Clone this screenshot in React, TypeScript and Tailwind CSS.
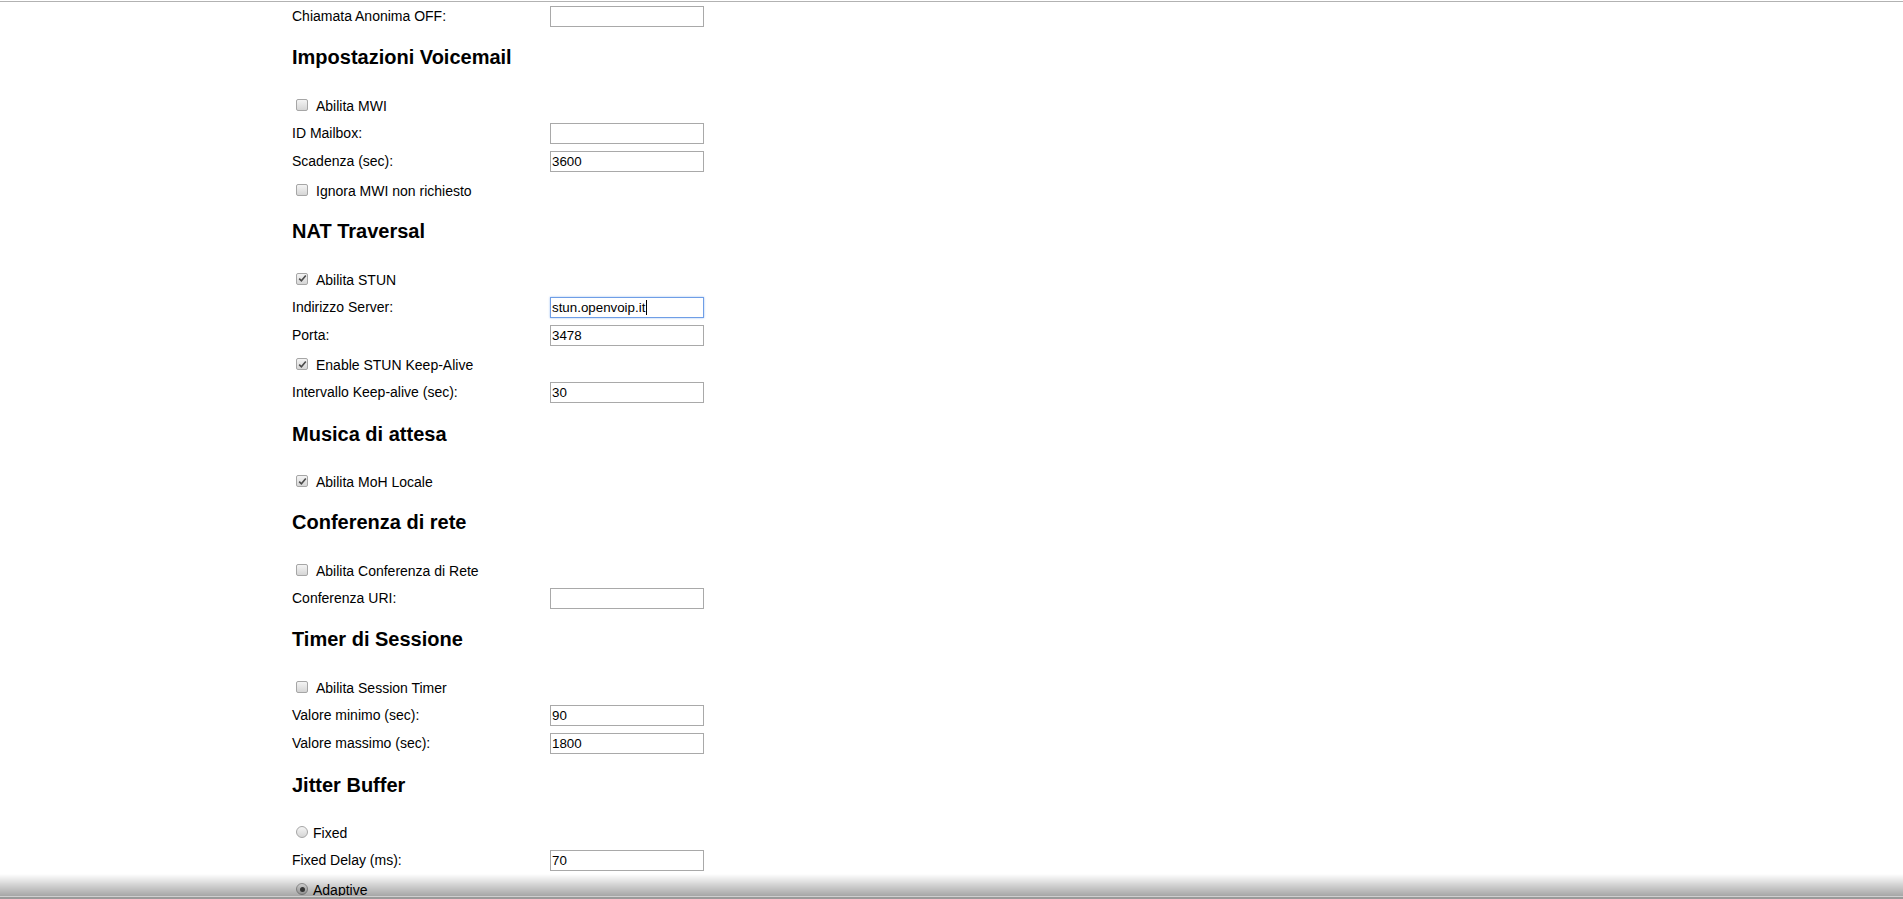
import React from "react";

type Row =
  | { kind: "heading"; text: string }
  | { kind: "input"; label: string; value: string; focused?: boolean }
  | { kind: "check"; label: string; checked: boolean }
  | { kind: "radio"; label: string; checked: boolean };

const rows: Row[] = [
  { kind: "input", label: "Chiamata Anonima OFF:", value: "" },
  { kind: "heading", text: "Impostazioni Voicemail" },
  { kind: "check", label: "Abilita MWI", checked: false },
  { kind: "input", label: "ID Mailbox:", value: "" },
  { kind: "input", label: "Scadenza (sec):", value: "3600" },
  { kind: "check", label: "Ignora MWI non richiesto", checked: false },
  { kind: "heading", text: "NAT Traversal" },
  { kind: "check", label: "Abilita STUN", checked: true },
  { kind: "input", label: "Indirizzo Server:", value: "stun.openvoip.it", focused: true },
  { kind: "input", label: "Porta:", value: "3478" },
  { kind: "check", label: "Enable STUN Keep-Alive", checked: true },
  { kind: "input", label: "Intervallo Keep-alive (sec):", value: "30" },
  { kind: "heading", text: "Musica di attesa" },
  { kind: "check", label: "Abilita MoH Locale", checked: true },
  { kind: "heading", text: "Conferenza di rete" },
  { kind: "check", label: "Abilita Conferenza di Rete", checked: false },
  { kind: "input", label: "Conferenza URI:", value: "" },
  { kind: "heading", text: "Timer di Sessione" },
  { kind: "check", label: "Abilita Session Timer", checked: false },
  { kind: "input", label: "Valore minimo (sec):", value: "90" },
  { kind: "input", label: "Valore massimo (sec):", value: "1800" },
  { kind: "heading", text: "Jitter Buffer" },
  { kind: "radio", label: "Fixed", checked: false },
  { kind: "input", label: "Fixed Delay (ms):", value: "70" },
  { kind: "radio", label: "Adaptive", checked: true },
];

function CheckBox({ checked }: { checked: boolean }) {
  return (
    <span className="mb-[3px] ml-[4px] flex h-[12px] w-[12px] items-center justify-center rounded-[2px] border border-[#a6a6a6] bg-linear-to-b from-[#f4f4f4] to-[#d6d6d6]">
      {checked ? (
        <svg width="9" height="9" viewBox="0 0 9 9">
          <path d="M1.2 4.6 L3.4 6.8 L7.8 1.6" fill="none" stroke="#4b4b4b" strokeWidth="1.6" />
        </svg>
      ) : null}
    </span>
  );
}

function Radio({ checked }: { checked: boolean }) {
  return (
    <span className="mb-[3px] ml-[4px] flex h-[12px] w-[12px] items-center justify-center rounded-full border border-[#a6a6a6] bg-linear-to-b from-[#f4f4f4] to-[#d6d6d6]">
      {checked ? <span className="h-[5px] w-[5px] rounded-full bg-[#444]" /> : null}
    </span>
  );
}

export default function App() {
  return (
    <div className="relative h-screen overflow-hidden bg-white pt-px font-['Liberation_Sans',Arial,sans-serif] text-black">
      <div className="h-px w-full bg-[#b2b2b2]" />

      <div className="pl-[292px]">
        {rows.map((r, i) => {
          if (r.kind === "heading") {
            return (
              <h3
                key={i}
                className="mt-[14.75px] mb-[21.25px] h-[24px] text-[20px] font-bold leading-[24px]"
              >
                {r.text}
              </h3>
            );
          }

          if (r.kind === "input") {
            return (
              <div key={i} className="flex h-[28.5px] items-center text-[14px]">
                <span className="w-[258px]">{r.label}</span>
                <div className="relative">
                  <input
                    type="text"
                    defaultValue={r.value}
                    className={
                      "h-[21px] w-[154px] border bg-white pl-[1px] text-[13.33px] text-black outline-none " +
                      (r.focused
                        ? "border-[#6f9ee6] shadow-[0_0_2px_#9fc1f2]"
                        : "border-[#a9a9a9]")
                    }
                  />
                  {r.focused ? (
                    <span className="absolute left-[96px] top-[3px] h-[15px] w-px bg-black" />
                  ) : null}
                </div>
              </div>
            );
          }

          return (
            <div key={i} className="flex h-[28.5px] items-center pt-[3px] text-[14px]">
              {r.kind === "check" ? (
                <CheckBox checked={r.checked} />
              ) : (
                <Radio checked={r.checked} />
              )}
              <span className={r.kind === "check" ? "ml-[8px]" : "ml-[5px]"}>{r.label}</span>
            </div>
          );
        })}
      </div>

      {/* window bottom shadow */}
      <div className="pointer-events-none fixed inset-x-0 bottom-0">
        <div className="h-[22px] bg-linear-to-b from-black/0 to-black/35" />
        <div className="h-px bg-[#cfcfcf]" />
        <div className="h-[2px] bg-[#9a9a9a]" />
      </div>
    </div>
  );
}
